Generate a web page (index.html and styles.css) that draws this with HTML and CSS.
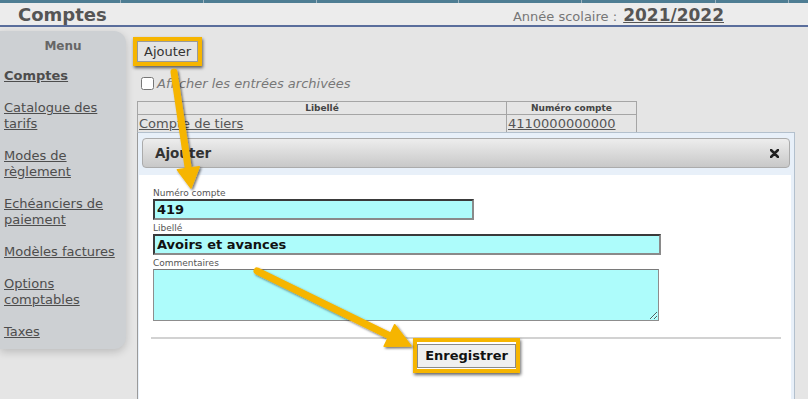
FILE: index.html
```html
<!DOCTYPE html>
<html lang="fr">
<head>
<meta charset="utf-8">
<title>Comptes</title>
<link rel="stylesheet" href="styles.css">
</head>
<body>
<div class="topbar"><span></span><span></span><span></span><span></span><span></span><span></span><span></span><span></span></div>
<header class="header">
  <h1 class="title">Comptes</h1>
  <div class="year">Année scolaire : <a href="#" class="year-link">2021/2022</a></div>
</header>
<div class="main">
  <nav class="sidebar">
    <div class="menu-title">Menu</div>
    <a href="#" class="nav-link active">Comptes</a>
    <a href="#" class="nav-link">Catalogue des tarifs</a>
    <a href="#" class="nav-link">Modes de règlement</a>
    <a href="#" class="nav-link">Echéanciers de paiement</a>
    <a href="#" class="nav-link">Modèles factures</a>
    <a href="#" class="nav-link">Options comptables</a>
    <a href="#" class="nav-link">Taxes</a>
  </nav>
  <section class="content">
    <div class="toolbar"><span class="hl hl-top"><button class="btn">Ajouter</button></span></div>
    <label class="archive"><input type="checkbox">Afficher les entrées archivées</label>
    <table class="grid">
      <thead><tr><th class="col-label">Libellé</th><th>Numéro compte</th></tr></thead>
      <tbody><tr><td><a href="#" class="cell-link">Compte de tiers</a></td><td><a href="#" class="cell-link">4110000000000</a></td></tr></tbody>
    </table>
  </section>
</div>

<div class="dialog">
  <div class="dialog-bar">
    <span class="dialog-title">Ajouter</span>
    <svg class="close" width="9" height="9" viewBox="0 0 9 9"><path d="M1 1 L8 8 M8 1 L1 8" stroke="#222" stroke-width="2.5" stroke-linecap="round"/></svg>
  </div>
  <div class="dialog-body">
    <div class="fields">
      <span class="field-label">Numéro compte</span>
      <input class="field-input w-short" type="text" value="419">
      <span class="field-label">Libellé</span>
      <input class="field-input w-long" type="text" value="Avoirs et avances">
      <span class="field-label">Commentaires</span>
      <textarea class="field-area"></textarea>
    </div>
    <hr class="sep">
    <div class="actions"><span class="hl hl-save"><button class="btn btn-primary">Enregistrer</button></span></div>
  </div>
</div>

<svg class="annotations" width="808" height="399" viewBox="0 0 808 399">
  <defs>
    <filter id="sh" x="-20%" y="-20%" width="140%" height="140%">
      <feDropShadow dx="1.5" dy="1.5" stdDeviation="1.3" flood-color="#000" flood-opacity="0.55"/>
    </filter>
  </defs>
  <g filter="url(#sh)" fill="#f6b500" stroke="#f6b500">
    <line x1="174" y1="72" x2="188.3" y2="169" stroke-width="7" stroke-linecap="round"/>
    <polygon points="191,188 177.4,169.7 199.2,166.7" stroke-width="1.5" stroke-linejoin="round"/>
    <line x1="257" y1="271" x2="390" y2="336" stroke-width="7" stroke-linecap="round"/>
    <polygon points="411,346 384.1,346.3 394.7,324.7" stroke-width="1.5" stroke-linejoin="round"/>
  </g>
</svg>
</body>
</html>
```
FILE: styles.css
```css
* { box-sizing: border-box; }
html, body { margin: 0; padding: 0; overflow: hidden; }
body {
  width: 808px;
  height: 399px;
  position: relative;
  background: #e5e5e5;
  font-family: "DejaVu Sans", Verdana, sans-serif;
  font-size: 13px;
  color: #444;
}

.topbar { display: flex; height: 3px; background: #4e7d93; }
.topbar span { height: 3px; border-right: 1px solid #9fb4c0; }
.topbar span:nth-child(1) { width: 121px; }
.topbar span:nth-child(2) { width: 83px; }
.topbar span:nth-child(3) { width: 113px; }
.topbar span:nth-child(4) { width: 142px; }
.topbar span:nth-child(5) { width: 123px; }
.topbar span:nth-child(6) { width: 134px; }
.topbar span:nth-child(7) { width: 73px; }
.topbar span:nth-child(8) { flex: 1; border-right: 0; }

.header {
  height: 24px;
  background: #ececec;
  border-bottom: 2px solid #5a6e9c;
  display: flex;
  justify-content: space-between;
  align-items: baseline;
  padding: 0 84px 0 18px;
}
.title { margin: 0; font-size: 18px; font-weight: bold; color: #555; line-height: 23px; }
.year { font-size: 13px; color: #777; line-height: 23px; }
.year-link { font-size: 17px; font-weight: bold; color: #555; margin-left: 2px; }

.main { display: flex; align-items: flex-start; padding-top: 4px; }
.sidebar {
  width: 126px;
  height: 318px;
  flex: none;
  background: #cdd0d3;
  border-radius: 0 12px 12px 0;
  box-shadow: 0 3px 8px rgba(0, 0, 0, 0.18);
  padding: 7px 4px 0 4px;
  display: flex;
  flex-direction: column;
}
.menu-title { text-align: center; font-weight: bold; font-size: 12px; color: #666; line-height: 16px; margin-bottom: 14px; }
.nav-link { color: #4d4d4d; text-decoration: underline; line-height: 16px; margin-bottom: 16px; }
.nav-link.active { font-weight: bold; }

.content { margin-left: 11px; padding-top: 6px; flex: 1; }
.toolbar { display: flex; }
.hl {
  display: inline-flex;
  border: 4px solid #f6b500;
  box-shadow: 1px 2px 3px rgba(0, 0, 0, 0.6);
}
.hl-top { margin-left: -4px; }
.btn {
  font-family: inherit;
  font-size: 13px;
  color: #333;
  background: #e4e4e4;
  border: 1px solid #9a9a9a;
  border-radius: 0;
  padding: 1px 6px;
  line-height: 17px;
  margin: 0;
}

.archive { display: flex; align-items: center; margin-top: 9px; height: 16px; font-style: italic; color: #777; }
.archive input { margin: 0 3px 0 4px; width: 13px; height: 13px; }

.grid { border-collapse: collapse; width: 500px; margin-top: 10px; }
.grid th { font-size: 9px; font-weight: bold; color: #444; height: 13px; padding: 0; border: 1px solid #a5a5a5; line-height: 11px; }
.grid .col-label { width: 369px; }
.grid td { height: 18px; padding: 0 1px; border: 1px solid #a5a5a5; line-height: 16px; }
.cell-link { color: #555; }

.dialog {
  position: absolute;
  left: 137px;
  top: 132px;
  width: 658px;
  height: 267px;
  border: 1px solid #b3c0cd;
  border-left-color: #9a9a9a;
  border-bottom: 0;
  background: #e8f0f9;
  display: flex;
  flex-direction: column;
}
.dialog-bar {
  margin: 5px 4px 7px 4px;
  height: 30px;
  flex: none;
  border: 1px solid #ababab;
  border-radius: 4px;
  background: linear-gradient(#ededed, #c8c8c8);
  display: flex;
  align-items: center;
  justify-content: space-between;
  padding: 0 10px 0 12px;
}
.dialog-title { font-size: 13.5px; font-weight: bold; color: #333; }
.close { display: block; }
.dialog-body { background: #fff; margin: 0 3px 0 1px; flex: 1; padding-top: 13px; }

.fields { padding-left: 14px; display: flex; flex-direction: column; align-items: flex-start; }
.field-label { font-size: 9px; color: #555; line-height: 11px; }
.field-input {
  height: 21px;
  border: 2px solid;
  border-color: #3a3a3a #8a8a8a #8a8a8a #3a3a3a;
  background: #adfcfb;
  font-family: inherit;
  font-size: 13px;
  font-weight: bold;
  color: #111;
  padding: 0 2px;
  margin: 0 0 3px 0;
}
.w-short { width: 321px; }
.w-long { width: 508px; }
.field-area {
  width: 506px;
  height: 52px;
  border: 1px solid #8d8d8d;
  border-top-color: #7a7a7a;
  background: #adfcfb;
  margin: 0;
  resize: both;
}
.sep { margin: 16px 10px 0 12px; border: 0; border-top: 2px solid #d2d2d2; height: 0; }
.actions { display: flex; justify-content: center; padding-left: 3px; }
.hl-save { margin-top: -1px; padding: 2px 0 1px; }
.btn-primary { font-weight: bold; color: #111; background: #efefef; padding: 2px 7px; height: 24px; border: 1px solid #8a8a8a; line-height: 18px; }

.annotations { position: absolute; left: 0; top: 0; pointer-events: none; }
```
